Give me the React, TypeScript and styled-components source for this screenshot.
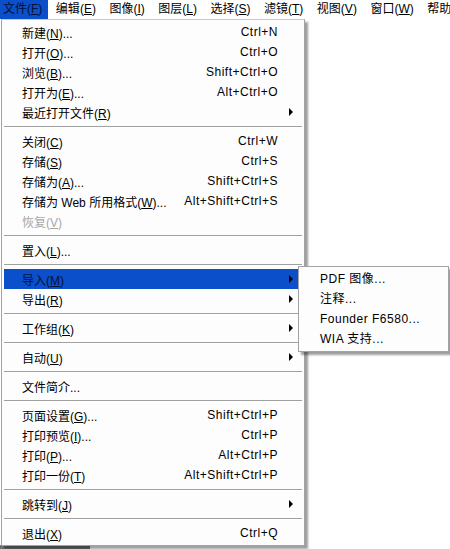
import React from "react";
import styled, { createGlobalStyle } from "styled-components";

const GlobalStyle = createGlobalStyle`
  html, body {
    margin: 0;
    padding: 0;
    background: #ffffff;
  }
  body {
    width: 450px;
    height: 549px;
    overflow: hidden;
    font-family: "Liberation Sans", "Noto Sans CJK SC", sans-serif;
    font-size: 12px;
    color: #000000;
  }
`;

type Entry =
  | { kind: "sep" }
  | {
      kind: "item";
      label: React.ReactNode;
      shortcut?: string;
      sub?: boolean;
      disabled?: boolean;
      active?: boolean;
    };

const m = (before: string, key: string, after = "") => (
  <>
    {before}(<u>{key}</u>){after}
  </>
);

const fileMenu: Entry[] = [
  { kind: "item", label: m("新建", "N", "..."), shortcut: "Ctrl+N" },
  { kind: "item", label: m("打开", "O", "..."), shortcut: "Ctrl+O" },
  { kind: "item", label: m("浏览", "B", "..."), shortcut: "Shift+Ctrl+O" },
  { kind: "item", label: m("打开为", "E", "..."), shortcut: "Alt+Ctrl+O" },
  { kind: "item", label: m("最近打开文件", "R"), sub: true },
  { kind: "sep" },
  { kind: "item", label: m("关闭", "C"), shortcut: "Ctrl+W" },
  { kind: "item", label: m("存储", "S"), shortcut: "Ctrl+S" },
  { kind: "item", label: m("存储为", "A", "..."), shortcut: "Shift+Ctrl+S" },
  { kind: "item", label: m("存储为 Web 所用格式", "W", "..."), shortcut: "Alt+Shift+Ctrl+S" },
  { kind: "item", label: m("恢复", "V"), disabled: true },
  { kind: "sep" },
  { kind: "item", label: m("置入", "L", "...") },
  { kind: "sep" },
  { kind: "item", label: m("导入", "M"), sub: true, active: true },
  { kind: "item", label: m("导出", "R"), sub: true },
  { kind: "sep" },
  { kind: "item", label: m("工作组", "K"), sub: true },
  { kind: "sep" },
  { kind: "item", label: m("自动", "U"), sub: true },
  { kind: "sep" },
  { kind: "item", label: "文件简介..." },
  { kind: "sep" },
  { kind: "item", label: m("页面设置", "G", "..."), shortcut: "Shift+Ctrl+P" },
  { kind: "item", label: m("打印预览", "I", "..."), shortcut: "Ctrl+P" },
  { kind: "item", label: m("打印", "P", "..."), shortcut: "Alt+Ctrl+P" },
  { kind: "item", label: m("打印一份", "T"), shortcut: "Alt+Shift+Ctrl+P" },
  { kind: "sep" },
  { kind: "item", label: m("跳转到", "J"), sub: true },
  { kind: "sep" },
  { kind: "item", label: m("退出", "X"), shortcut: "Ctrl+Q" },
];

const barItems = [
  ["文件", "F"],
  ["编辑", "E"],
  ["图像", "I"],
  ["图层", "L"],
  ["选择", "S"],
  ["滤镜", "T"],
  ["视图", "V"],
  ["窗口", "W"],
];

const importItems = ["PDF 图像...", "注释...", "Founder F6580...", "WIA 支持..."];

export default function App() {
  return (
    <Screen>
      <GlobalStyle />
      <MenuBar>
        {barItems.map(([name, key], i) => (
          <BarItem key={name} $open={i === 0}>
            {m(name, key)}
          </BarItem>
        ))}
        <BarItem>帮助</BarItem>
      </MenuBar>
      <Dropdown>
        {fileMenu.map((e, i) =>
          e.kind === "sep" ? (
            <Separator key={i} />
          ) : (
            <Row key={i} $active={e.active} $disabled={e.disabled}>
              <Label>{e.label}</Label>
              <Shortcut>{e.shortcut}</Shortcut>
              <ArrowCell>{e.sub && <Arrow />}</ArrowCell>
              {e.active && (
                <SubMenu>
                  {importItems.map((t) => (
                    <SubRow key={t}>{t}</SubRow>
                  ))}
                </SubMenu>
              )}
            </Row>
          )
        )}
      </Dropdown>
      <BackPanel />
    </Screen>
  );
}

const Screen = styled.div`
  position: relative;
  width: 450px;
  height: 549px;
  background: #ffffff;
`;

const MenuBar = styled.div`
  display: flex;
  gap: 4.5px;
  height: 19px;
  white-space: nowrap;
  overflow: hidden;
`;

const BarItem = styled.div<{ $open?: boolean }>`
  padding: 0 6px 0 3px;
  line-height: 19px;
  background: ${(p) => (p.$open ? "#0b4fcb" : "transparent")};
  color: ${(p) => (p.$open ? "#001038" : "#000000")};
`;

const Dropdown = styled.div`
  position: absolute;
  left: 1px;
  top: 19px;
  width: 304px;
  box-sizing: border-box;
  padding: 2px 6px 2px 2px;
  background: #fdfdfd;
  border: 1px solid #a3a3a3;
  border-top-color: #c8c8c8;
  box-shadow: 3px 3px 2px rgba(0, 0, 0, 0.38);
  display: flex;
  flex-direction: column;
  z-index: 1;
`;

const BackPanel = styled.div`
  position: absolute;
  left: 0;
  bottom: 0;
  width: 90px;
  height: 4px;
  background: #6e6e6e;
`;

const Row = styled.div<{ $active?: boolean; $disabled?: boolean }>`
  position: relative;
  display: grid;
  grid-template-columns: 1fr auto 20px;
  align-items: center;
  height: 20px;
  padding-left: 18px;
  white-space: nowrap;
  background: ${(p) => (p.$active ? "#0b4fcb" : "transparent")};
  color: ${(p) => (p.$disabled ? "#a8a8a8" : p.$active ? "#001038" : "#000000")};
  text-shadow: ${(p) => (p.$disabled ? "1px 1px 0 #ffffff" : "none")};
`;

const Label = styled.span``;

const Shortcut = styled.span`
  text-align: right;
  letter-spacing: 0.5px;
`;

const ArrowCell = styled.span`
  display: flex;
  align-items: center;
  padding-left: 11px;
`;

const Arrow = styled.span`
  width: 0;
  height: 0;
  border-top: 4px solid transparent;
  border-bottom: 4px solid transparent;
  border-left: 4px solid #000000;
`;

const Separator = styled.div`
  height: 9px;
  display: flex;
  align-items: center;
  margin-right: -4px;
  &::before {
    content: "";
    flex: 1;
    height: 1px;
    background: #a0a0a0;
    border-bottom: 1px solid #ffffff;
  }
`;

const SubMenu = styled.div`
  position: absolute;
  left: 294px;
  top: -3px;
  width: 151px;
  box-sizing: border-box;
  padding: 2px 2px;
  background: #fdfdfd;
  border: 1px solid #a3a3a3;
  box-shadow: 3px 3px 2px rgba(0, 0, 0, 0.38);
  color: #000000;
  display: flex;
  flex-direction: column;
  z-index: 2;
`;

const SubRow = styled.div`
  height: 20px;
  line-height: 20px;
  padding-left: 19px;
  white-space: nowrap;
  letter-spacing: 0.5px;
`;
